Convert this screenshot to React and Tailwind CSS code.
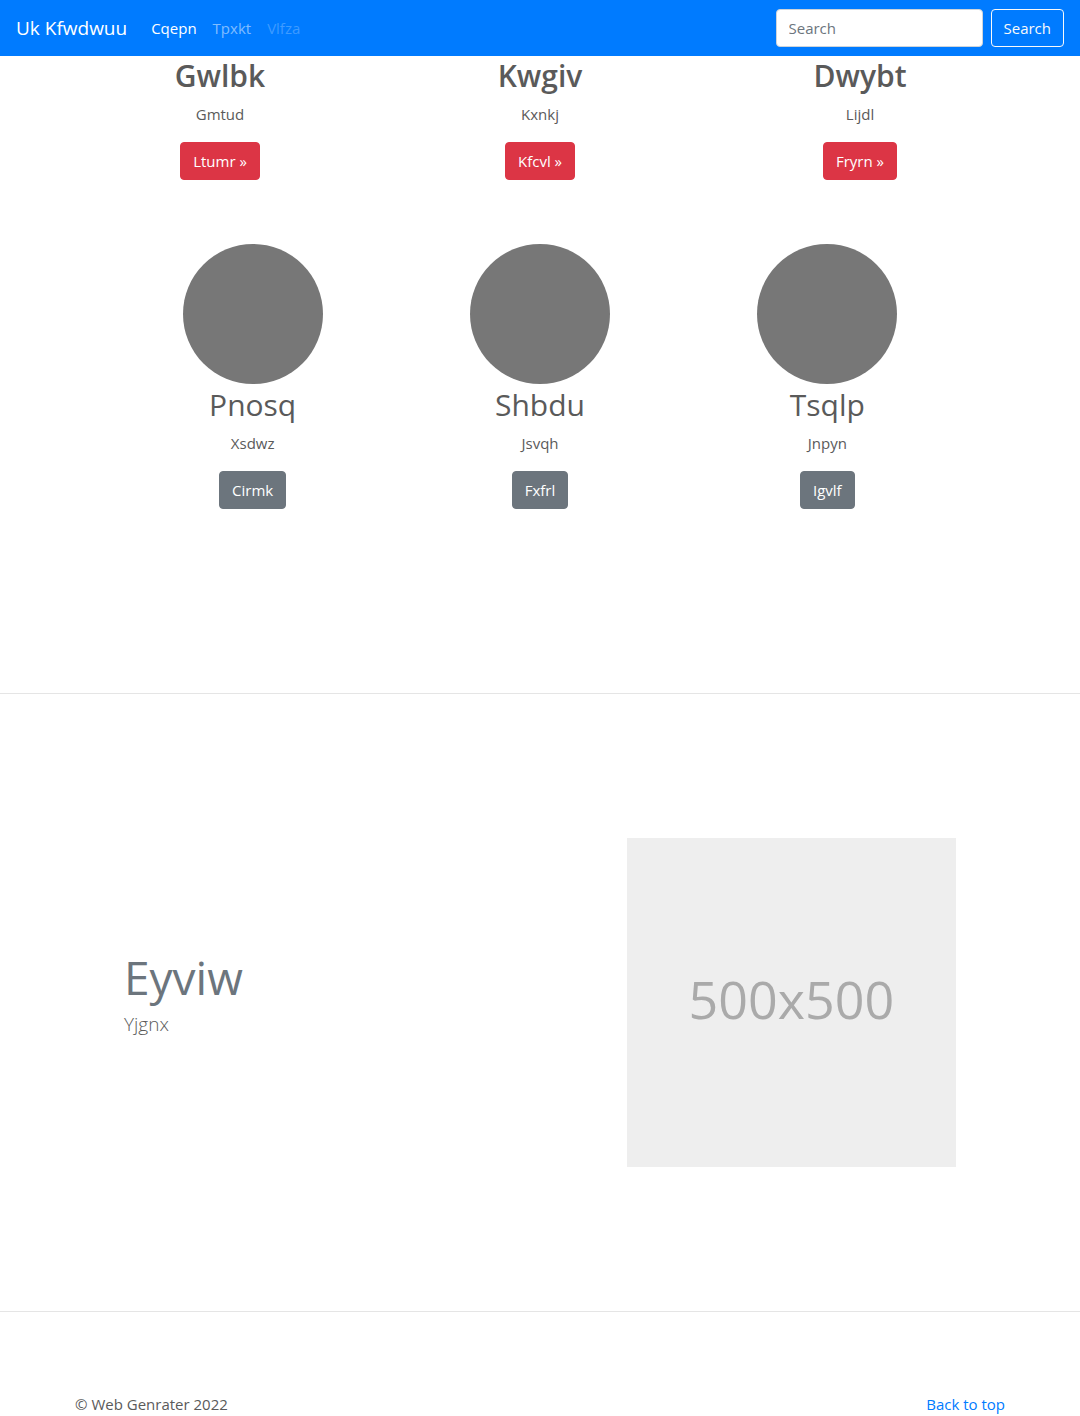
import React from "react";

const services = [
  { title: "Gwlbk", text: "Gmtud", action: "Ltumr »" },
  { title: "Kwgiv", text: "Kxnkj", action: "Kfcvl »" },
  { title: "Dwybt", text: "Lijdl", action: "Fryrn »" },
];

const people = [
  { title: "Pnosq", text: "Xsdwz", action: "Cirmk" },
  { title: "Shbdu", text: "Jsvqh", action: "Fxfrl" },
  { title: "Tsqlp", text: "Jnpyn", action: "Igvlf" },
];

function Navbar() {
  return (
    <nav className="flex h-14 items-center bg-[#007bff] px-4 text-white">
      <a href="#" className="mr-6 text-[19px] leading-[30px]">Uk Kfwdwuu</a>
      <ul className="mr-auto flex gap-4">
        <li><a href="#" className="text-white">Cqepn</a></li>
        <li><a href="#" className="text-white/50">Tpxkt</a></li>
        <li><a href="#" aria-disabled="true" className="text-white/25">Vlfza</a></li>
      </ul>
      <form className="flex gap-2" onSubmit={(e) => e.preventDefault()}>
        <input
          type="search"
          placeholder="Search"
          aria-label="Search"
          className="h-[38px] w-[207px] rounded border border-[#ced4da] bg-white px-3 text-[#495057] placeholder:text-[#6c757d]"
        />
        <button type="submit" className="h-[38px] rounded border border-[#f8f9fa] px-3 text-[#f8f9fa]">
          Search
        </button>
      </form>
    </nav>
  );
}

function Services() {
  return (
    <section className="mx-auto grid max-w-[960px] grid-cols-3 text-center">
      {services.map((s) => (
        <div key={s.title} className="flex flex-col items-center">
          <h2 className="mb-1.5 text-[30px] leading-10 font-semibold">{s.title}</h2>
          <p className="mb-4">{s.text}</p>
          <a href="#" className="rounded border border-[#dc3545] bg-[#dc3545] px-3 py-1.5 text-white">{s.action}</a>
        </div>
      ))}
    </section>
  );
}

function People() {
  return (
    <section className="mx-auto mt-16 grid max-w-[960px] grid-cols-3 px-[49px] text-center">
      {people.map((p) => (
        <div key={p.title} className="flex flex-col items-center">
          <div className="size-[140px] rounded-full bg-[#777]" />
          <h2 className="mt-px mb-1.5 text-[30px] leading-10">{p.title}</h2>
          <p className="mb-4">{p.text}</p>
          <a href="#" className="rounded border border-[#6c757d] bg-[#6c757d] px-3 py-1.5 text-white">{p.action}</a>
        </div>
      ))}
    </section>
  );
}

function Featurette() {
  return (
    <section className="mx-auto my-36 grid max-w-[960px] grid-cols-12 items-center px-[49px]">
      <div className="col-span-7 px-[15px] pb-4">
        <h2 className="mb-1.5 text-[46px] leading-[52px] text-[#6c757d]">Eyviw</h2>
        <p className="text-[19px] leading-[30px] font-light">Yjgnx</p>
      </div>
      <div className="col-span-5 px-[15px]">
        <div className="flex aspect-square items-center justify-center bg-[#eee] pb-2 text-[52px] leading-none text-[#aaa]">
          500x500
        </div>
      </div>
    </section>
  );
}

export default function App() {
  return (
    <div className="font-['Open_Sans',sans-serif] text-[15px] leading-6 text-[#5a5a5a]">
      <Navbar />
      <main>
        <Services />
        <People />
        <hr className="mt-46 border-black/10" />
        <Featurette />
        <hr className="border-black/10" />
      </main>
      <footer className="mx-auto mt-20 flex max-w-[960px] justify-between px-[15px]">
        <p>© Web Genrater 2022</p>
        <a href="#" className="text-[#007bff]">Back to top</a>
      </footer>
    </div>
  );
}
